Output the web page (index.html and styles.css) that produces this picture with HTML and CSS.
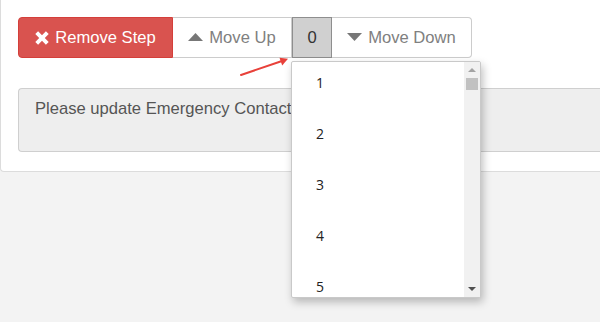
FILE: index.html
```html
<!DOCTYPE html>
<html>
<head>
<meta charset="utf-8">
<link rel="stylesheet" href="styles.css">
</head>
<body>
<div class="panel">
  <div class="btn-group">
    <button class="btn btn-danger"><svg class="ico-x" viewBox="0 0 14 14" width="14" height="14"><path d="M0.3 3.1 L3.1 0.3 L7 4.2 L10.9 0.3 L13.7 3.1 L9.8 7 L13.7 10.9 L10.9 13.7 L7 9.8 L3.1 13.7 L0.3 10.9 L4.2 7 Z" fill="#fff"/></svg><span>Remove Step</span></button>
    <button class="btn btn-default"><svg class="ico-tri" viewBox="0 0 15 8" width="15" height="8"><path d="M0 8 L7.5 0 L15 8 Z" fill="#777"/></svg><span>Move Up</span></button>
    <button class="btn btn-num">0</button>
    <button class="btn btn-default btn-last"><svg class="ico-tri" viewBox="0 0 15 8" width="15" height="8"><path d="M0 0 L15 0 L7.5 8 Z" fill="#777"/></svg><span>Move Down</span></button>
  </div>
  <div class="well">Please update Emergency Contact</div>
</div>

<svg class="pointer" width="60" height="30" viewBox="0 0 60 30">
  <line x1="3" y1="22" x2="44" y2="8" stroke="#e8413a" stroke-width="2" stroke-linecap="round"/>
  <path d="M50 5.8 L41.5 4.8 L44.2 12.6 Z" fill="#e8413a"/>
</svg>

<div class="dropdown">
  <ul class="options">
    <li>1</li>
    <li>2</li>
    <li>3</li>
    <li>4</li>
    <li>5</li>
  </ul>
  <div class="scrollbar">
    <span class="sb-up"></span>
    <span class="sb-thumb"></span>
    <span class="sb-fill"></span>
    <span class="sb-down"></span>
  </div>
</div>
</body>
</html>
```

FILE: styles.css
```css
html, body {
  margin: 0;
  padding: 0;
}
body {
  background: #f3f3f3;
  font-family: "Liberation Sans", Arial, sans-serif;
  width: 600px;
  height: 322px;
  overflow: hidden;
  position: relative;
}
.panel {
  background: #fff;
  border: 1px solid #dcdcdc;
  border-top: none;
  border-right: none;
  border-radius: 0 0 0 4px;
  padding: 17px 0 18px 17px;
  box-sizing: border-box;
  height: 172px;
}
.btn-group {
  display: flex;
  height: 41px;
}
.btn {
  font-family: "Liberation Sans", Arial, sans-serif;
  font-size: 16.6px;
  height: 41px;
  margin: 0;
  box-sizing: border-box;
  display: flex;
  align-items: center;
  justify-content: center;
  gap: 6px;
  border: 1px solid #ccc;
  padding: 0;
  background: #fff;
}
.btn-danger {
  width: 155px;
  background: #d9534f;
  border-color: #d43f3a;
  color: #fff;
  border-radius: 4px 0 0 4px;
  gap: 6px;
}
.btn-default {
  color: #808080;
  width: 119px;
  border-left: none;
}
.btn-num {
  width: 40px;
  background: #d0d0d0;
  border: 1px solid #8e8e8e;
  color: #333;
  font-size: 16.6px;
}
.btn-last {
  width: 140px;
  border-radius: 0 4px 4px 0;
  gap: 6px;
}
.ico-x { display: block; }
.ico-tri { display: block; margin-top: -2px; }
.well {
  margin-top: 30px;
  height: 64px;
  box-sizing: border-box;
  background: #eee;
  border: 1px solid #cfcfcf;
  border-right: none;
  border-radius: 4px 0 0 4px;
  padding: 10px 16px;
  font-size: 16.6px;
  color: #555;
  white-space: nowrap;
}
.pointer {
  position: absolute;
  left: 238px;
  top: 53px;
}
.dropdown {
  position: absolute;
  left: 291px;
  top: 61px;
  width: 190px;
  height: 237px;
  background: #fff;
  border: 1px solid #c9c9c9;
  box-sizing: border-box;
  border-radius: 2px;
  box-shadow: 2px 4px 8px rgba(0,0,0,0.25);
  display: flex;
  overflow: hidden;
}
.options {
  list-style: none;
  margin: -5px 0 0 0;
  padding: 0;
  flex: 1;
  font-family: "Open Sans", "Noto Sans", sans-serif;
  font-size: 14px;
  color: #222;
}
.options li {
  height: 51px;
  line-height: 51px;
  padding-left: 24px;
}
.scrollbar {
  width: 16px;
  background: #f1f1f1;
  display: flex;
  flex-direction: column;
  align-items: center;
}
.sb-up {
  margin-top: 6px;
  width: 0;
  height: 0;
  border-left: 4px solid transparent;
  border-right: 4px solid transparent;
  border-bottom: 4px solid #a3a3a3;
}
.sb-thumb {
  margin-top: 6px;
  width: 12px;
  height: 12px;
  background: #c1c1c1;
}
.sb-fill { flex: 1; }
.sb-down {
  margin-bottom: 6px;
  width: 0;
  height: 0;
  border-left: 4px solid transparent;
  border-right: 4px solid transparent;
  border-top: 4px solid #505050;
}
```
